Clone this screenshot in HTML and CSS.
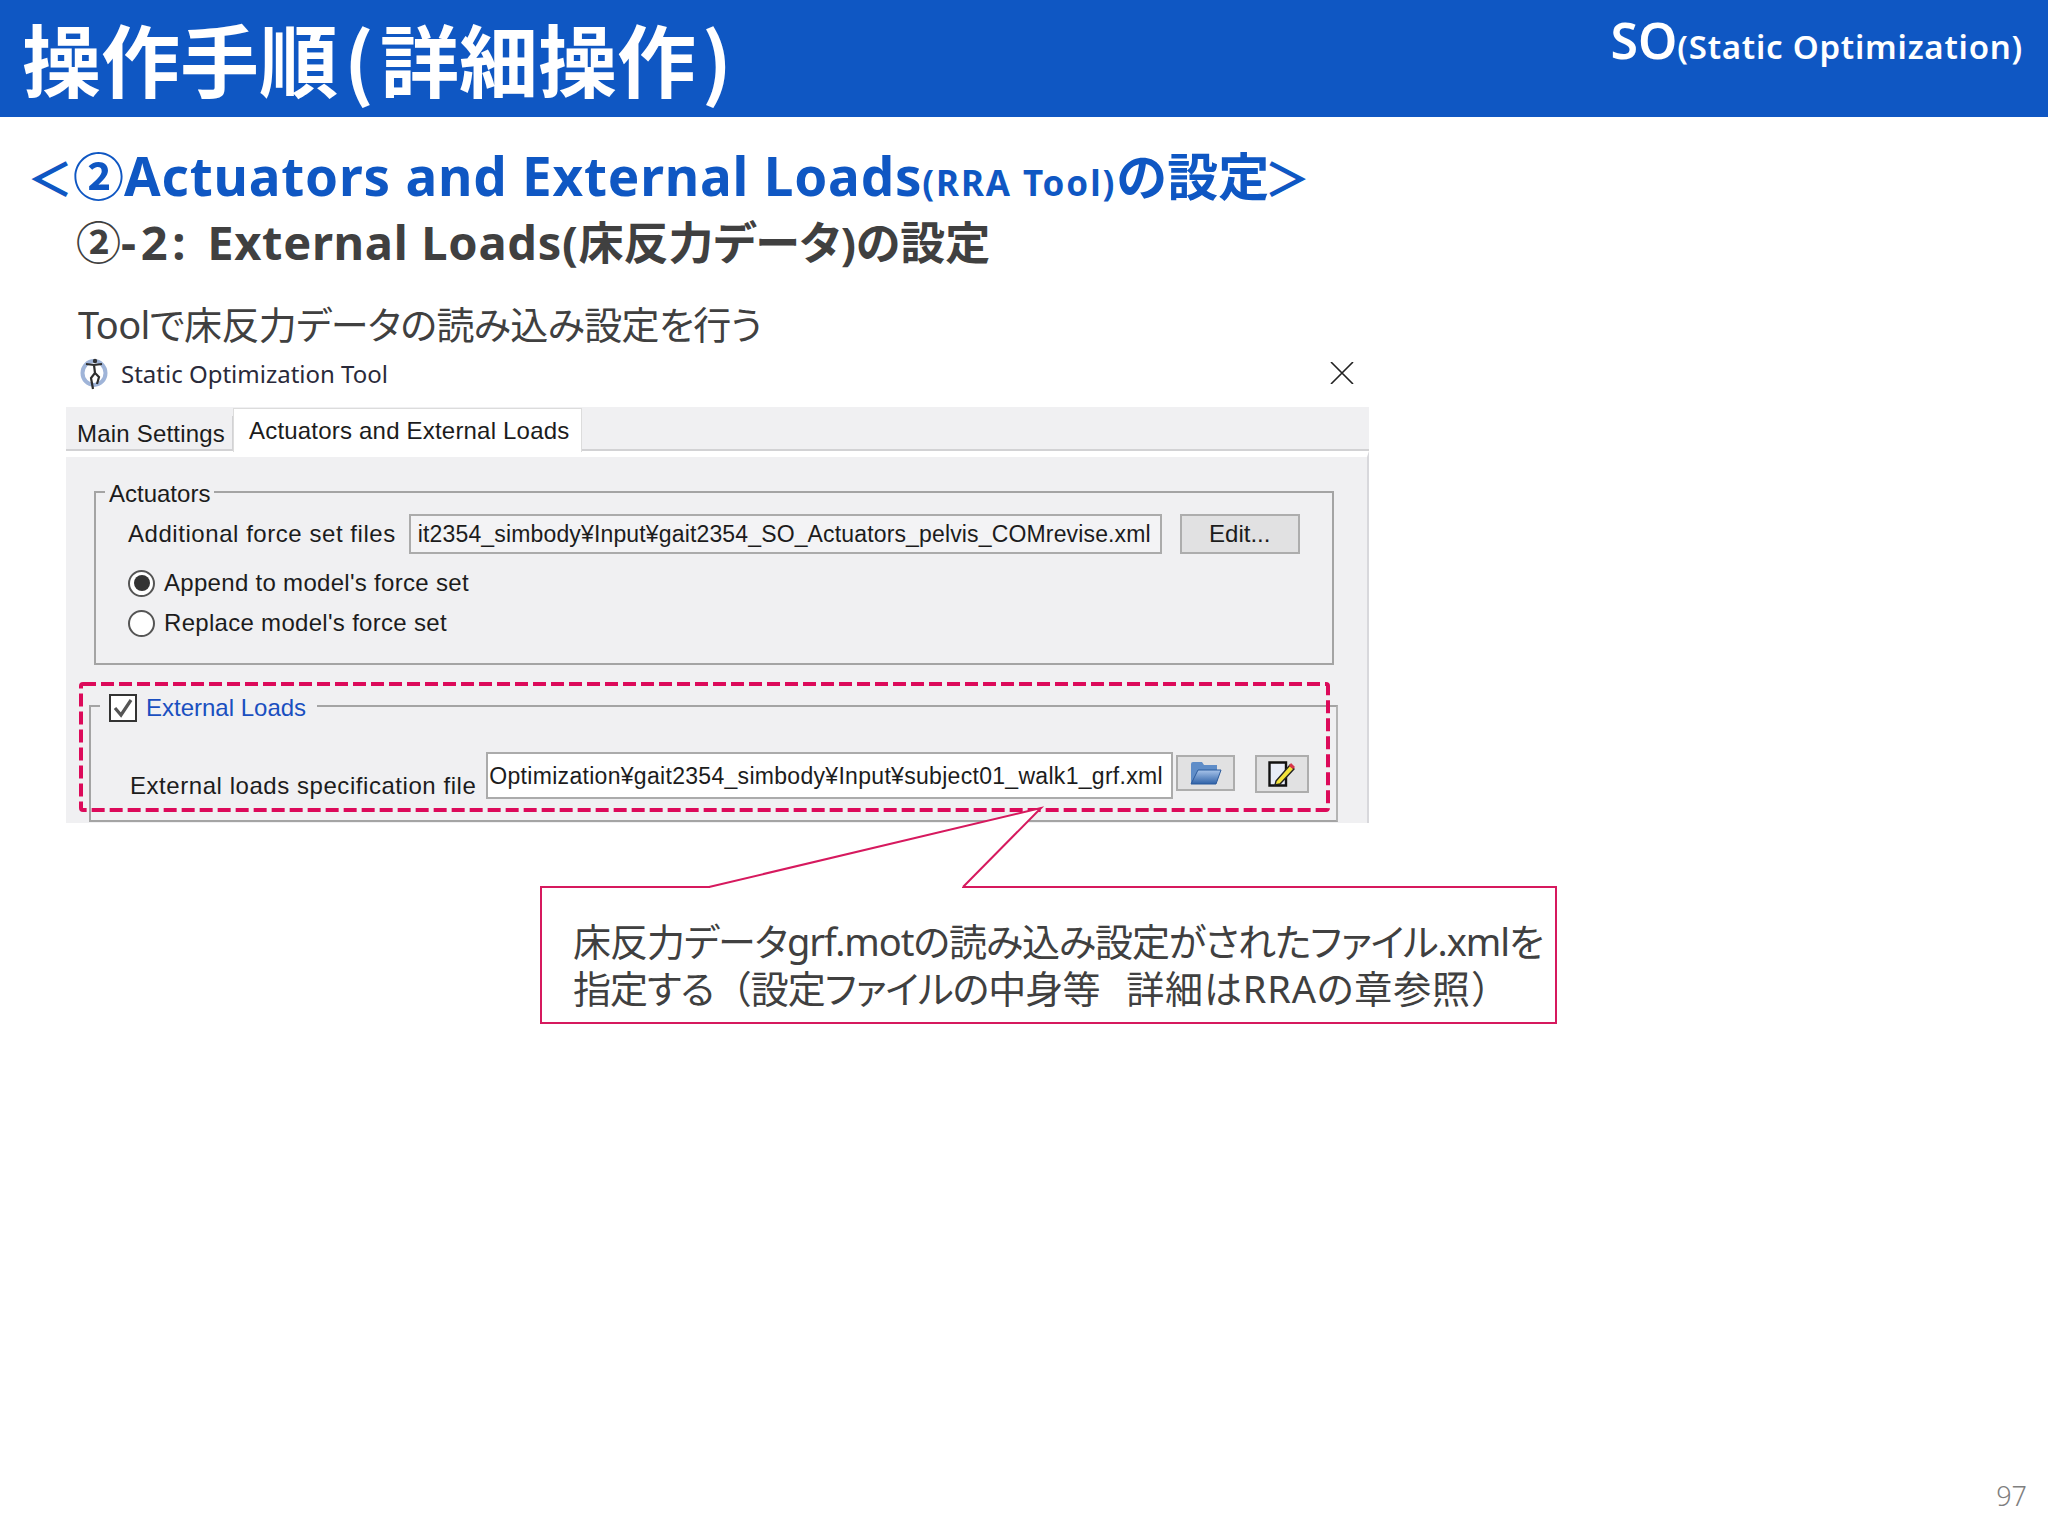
FILE: index.html
```html
<!DOCTYPE html>
<html lang="ja">
<head>
<meta charset="utf-8">
<title>操作手順(詳細操作)</title>
<link rel="stylesheet" href="styles.css">
</head>
<body>
<div class="slide">
  <header class="slide-header">
    <div class="slide-title">操作手順<span class="title-paren">(</span>詳細操作<span class="title-paren">)</span></div>
    <div class="slide-tag"><span class="tag-big">SO</span>(Static Optimization)</div>
  </header>
  <main class="slide-body">
    <h1 class="heading"><span class="chevron chevron-open">＜</span>②<span class="latin-wide">Actuators and External Loads</span><span class="heading-small">(RRA Tool)</span>の設<span class="heading-tight">定</span><span class="chevron">＞</span></h1>
    <h2 class="subheading">②<span class="latin-sub latin-num">-2: </span><span class="latin-sub">External Loads(</span><span class="sub-cjk">床反力データ)の設定</span></h2>
    <p class="lead">Toolで床反力データの読み込み設定を行う</p>

    <section class="dialog">
      <div class="titlebar">
        <svg class="app-icon" viewBox="0 0 28 34" aria-hidden="true">
          <ellipse cx="14" cy="17" rx="11.5" ry="12" fill="none" stroke="#9fb4d8" stroke-width="4"/>
          <circle cx="15" cy="5" r="2.2" fill="#333"/>
          <path d="M6 8 L14 9 L22 8 M14 9 L15 17 L11 22 L13 33 M15 17 L19 21 L17 28" fill="none" stroke="#2e2e2e" stroke-width="2.2"/>
        </svg>
        <span class="titlebar-text">Static Optimization Tool</span>
        <svg class="close-icon" viewBox="0 0 24 22" aria-hidden="true"><path d="M1 0 L23 22 M23 0 L1 22" stroke="#222" stroke-width="1.6" fill="none"/></svg>
      </div>
      <div class="tabs">
        <div class="tab">Main Settings</div>
        <div class="tab tab-active">Actuators and External Loads</div>
      </div>
      <div class="panel">
        <fieldset class="group group-actuators">
          <legend class="group-legend">Actuators</legend>
          <div class="file-row">
            <span class="ui-label">Additional force set files</span>
            <div class="field field-gray">it2354_simbody¥Input¥gait2354_SO_Actuators_pelvis_COMrevise.xml</div>
            <div class="btn btn-edit">Edit...</div>
          </div>
          <div class="radio-row"><span class="radio radio-on"></span><span class="ui-label radio-label">Append to model's force set</span></div>
          <div class="radio-row radio-row-2"><span class="radio"></span><span class="ui-label radio-label">Replace model's force set</span></div>
        </fieldset>
        <fieldset class="group group-loads">
          <legend class="group-legend legend-check">
            <span class="checkbox"><svg viewBox="0 0 24 24" aria-hidden="true"><path d="M4 12 L10 19 L20 4" fill="none" stroke="#555" stroke-width="3.2"/></svg></span>
            <span class="legend-blue">External Loads</span>
          </legend>
          <div class="file-row file-row-loads">
            <span class="ui-label label-low">External loads specification file</span>
            <div class="field field-white">Optimization¥gait2354_simbody¥Input¥subject01_walk1_grf.xml</div>
            <div class="btn btn-folder">
              <svg class="folder-icon" viewBox="0 0 32 24" aria-hidden="true">
                <defs><linearGradient id="folderGrad" x1="0" y1="0" x2="0" y2="1"><stop offset="0" stop-color="#a8c4ea"/><stop offset="1" stop-color="#2f62a8"/></linearGradient></defs>
                <path d="M1 3 Q1 1 3 1 H12 L14 4 H27 V10 H8 L2 22 H1 Z" fill="#5f8dc8"/>
                <path d="M8 9 H31 L26 23 H1 Z" fill="url(#folderGrad)" stroke="#2b5a9c" stroke-width="1"/>
              </svg>
            </div>
            <div class="btn btn-pen">
              <svg class="pen-icon" viewBox="0 0 28 26" aria-hidden="true">
                <path d="M1.5 1.5 H18 V24.5 H1.5 Z" fill="#e8ecf8" stroke="#111" stroke-width="2.4"/>
                <path d="M8 20 L22 4 L26 8 L12 23 L7 24 Z" fill="#f3e33a" stroke="#222" stroke-width="1.4"/>
                <path d="M21 5 L23 2 L27 6 L25 8 Z" fill="#d8344a"/>
              </svg>
            </div>
          </div>
        </fieldset>
      </div>
      <svg class="dash-mark" viewBox="0 0 1251 130" aria-hidden="true">
        <rect x="2" y="2" width="1247" height="126" rx="2" fill="none" stroke="#dc0a5a" stroke-width="4" stroke-dasharray="13 5"/>
      </svg>
    </section>

    <aside class="callout">
      <svg class="callout-tail" viewBox="0 0 1017 84" aria-hidden="true">
        <polygon points="169,81 501,2 423,81" fill="#fff"/>
        <rect x="170" y="79" width="252" height="4" fill="#fff"/>
        <polyline points="169,81 501,2 423,81" fill="none" stroke="#d6195e" stroke-width="2"/>
      </svg>
      <p class="callout-text callout-line-1">床反力データgrf.motの読み込み設定がされたファイル.xmlを</p>
      <p class="callout-text callout-line-2">指定する<span class="full-paren">（</span>設定ファイルの中身等&nbsp;&nbsp;&nbsp;<span class="callout-wide">詳細はRRAの章参照<span class="full-paren">）</span></span></p>
    </aside>
  </main>
  <footer class="page-number">97</footer>
</div>
</body>
</html>
```
FILE: styles.css
```css
* { box-sizing: border-box; }
html, body { margin: 0; padding: 0; background: #fff; }
body { font-family: "Noto Sans", "Noto Sans CJK JP", sans-serif; color: #404040; }

.slide { width: 2048px; min-height: 1536px; display: flex; flex-direction: column; overflow: hidden; }

.slide-header { height: 117px; background: #0f57c3; color: #fff; display: flex; justify-content: space-between; align-items: flex-start; padding: 0 25px 0 22px; flex: none; }
.slide-title { font-family: "Noto Sans CJK JP", sans-serif; font-weight: 700; font-size: 79px; line-height: 116px; white-space: nowrap; }
.title-paren { margin: 0 6px; }
.slide-tag { font-weight: 600; font-size: 33px; line-height: 46px; padding-top: 17px; white-space: nowrap; letter-spacing: 0.75px; }
.tag-big { font-size: 50px; letter-spacing: 0; }

.slide-body { flex: none; }

.heading { margin: 29px 0 0 22px; font-size: 51px; line-height: 60px; font-weight: 700; color: #0f57c3; white-space: nowrap; }
.chevron { font-size: 46px; }
.chevron-open { margin-left: 5px; }
.heading-tight { letter-spacing: -5px; }
.latin-wide { font-size: 53px; letter-spacing: 0.8px; }
.heading-small { font-size: 35px; letter-spacing: 1.9px; }
.subheading { margin: 4px 0 0 76px; font-size: 45px; line-height: 50px; font-weight: 700; color: #404040; white-space: nowrap; }
.latin-sub { font-size: 47px; letter-spacing: 0.7px; }
.latin-num { letter-spacing: 4.7px; }
.sub-cjk { font-feature-settings: "palt"; }
.lead { margin: 32px 0 0 78px; font-size: 38px; line-height: 48px; font-weight: 400; letter-spacing: -0.65px; font-feature-settings: "palt"; white-space: nowrap; }

.dialog { position: relative; margin: 7px 0 0 66px; width: 1303px; font-family: "Liberation Sans", sans-serif; color: #1c1c1c; }

.titlebar { height: 52px; display: flex; align-items: center; padding: 0 15px 16px 14px; background: #fff; }
.app-icon { width: 28px; height: 34px; }
.titlebar-text { margin-left: 13px; font-family: "Noto Sans", sans-serif; font-size: 24px; color: #2a2a3a; }
.close-icon { width: 24px; height: 22px; margin-left: auto; }

.tabs { height: 44px; background: #f0f0f2; border-bottom: 2px solid #d2d2d4; display: flex; align-items: flex-end; }
.tab { width: 167px; height: 34px; padding-left: 11px; border-right: 1px solid #d2d2d4; font-size: 24px; line-height: 36px; letter-spacing: 0.2px; white-space: nowrap; margin-bottom: -1px; }
.tab-active { width: 349px; height: 44px; padding-left: 15px; background: #fff; line-height: 44px; letter-spacing: 0.2px; border: 1px solid #dcdcdc; border-bottom: 0; margin-bottom: -3px; position: relative; }

.panel { height: 372px; background: #f0f0f2; border-top: 6px solid #fff; border-right: 2px solid #d8d8dc; padding: 19px 0 0 28px; }

.group { margin: 0; border: 2px solid #a4a4a4; min-width: 0; padding: 0; }
.group-actuators { width: 1240px; height: 189px; padding: 0 0 0 32px; }
.group-loads { width: 1249px; height: 132px; margin: 25px 0 0 -5px; padding: 0 0 0 39px; border-right-color: #b4b4b4; }
.group-legend { margin-left: -23px; padding: 4px 4px 0; font-size: 24px; line-height: 28px; }
.legend-check { margin-left: -30px; display: flex; align-items: center; gap: 9px; padding: 4px 11px 0 9px; height: 32px; }
.checkbox { width: 28px; height: 28px; background: #fff; border: 2px solid #333; display: block; flex: none; }
.checkbox svg { display: block; width: 24px; height: 24px; }
.legend-blue { color: #1a4fc0; }

.file-row { display: flex; align-items: center; margin-top: 6px; }
.file-row-loads { margin-top: 30px; align-items: flex-start; }
.ui-label { font-size: 24px; line-height: 28px; letter-spacing: 0.55px; white-space: nowrap; }
.radio-label { letter-spacing: 0.3px; }
.label-low { margin-top: 20px; }
.field { overflow: hidden; white-space: nowrap; font-size: 23px; border: 2px solid #ababab; }
.field-gray { width: 753px; height: 40px; line-height: 36px; margin-left: 13px; padding-left: 7px; background: #f3f3f5; letter-spacing: 0.15px; }
.field-white { width: 687px; height: 47px; line-height: 44px; margin-left: 10px; padding-left: 1px; background: #fff; letter-spacing: 0.3px; }
.btn { height: 40px; background: #e1e1e2; border: 2px solid #adadad; display: flex; align-items: center; justify-content: center; font-size: 24px; }
.btn-edit { width: 120px; margin-left: 18px; }
.btn-folder { width: 59px; height: 36px; margin: 3px 0 0 3px; }
.btn-pen { width: 54px; height: 38px; margin: 3px 0 0 20px; }
.folder-icon { width: 32px; height: 24px; }
.pen-icon { width: 28px; height: 26px; }

.radio-row { display: flex; align-items: center; gap: 9px; margin-top: 15px; }
.radio-row-2 { margin-top: 12px; }
.radio { width: 27px; height: 27px; border-radius: 50%; border: 2px solid #555; background: #fff; flex: none; display: flex; align-items: center; justify-content: center; }
.radio-on::after { content: ""; width: 16px; height: 16px; border-radius: 50%; background: #333; }

.dash-mark { position: absolute; left: 13px; top: 327px; width: 1251px; height: 130px; }

.callout { position: relative; margin: 63px 0 0 540px; width: 1017px; height: 138px; border: 2px solid #d6195e; background: #fff; padding: 30px 0 0 31px; }
.callout-tail { position: absolute; left: -2px; top: -82px; width: 1017px; height: 84px; overflow: visible; }
.callout-text { margin: 0; font-size: 38px; line-height: 47px; font-weight: 400; font-feature-settings: "palt"; white-space: nowrap; }
.callout-line-1 { letter-spacing: -1.05px; }
.callout-line-2 { letter-spacing: -0.95px; }
.callout-wide { letter-spacing: 0.85px; }
.full-paren { font-feature-settings: normal; }

.page-number { margin-top: auto; padding: 0 21px 22px 0; text-align: right; font-size: 27px; font-weight: 300; line-height: 36px; color: #7f7f7f; }
```
